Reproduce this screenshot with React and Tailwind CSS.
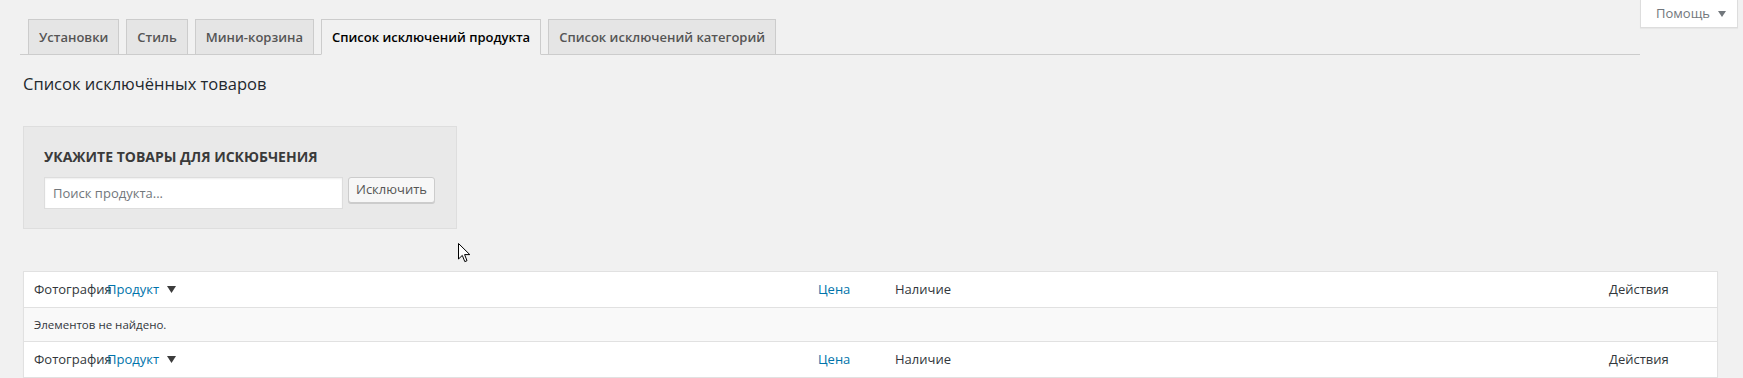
import React from 'react';

const tabs = [
    { label: 'Установки' },
    { label: 'Стиль' },
    { label: 'Мини-корзина' },
    { label: 'Список исключений продукта', active: true },
    { label: 'Список исключений категорий' },
];

const SortArrow = () => (
    <svg width="9" height="7" viewBox="0 0 9 7" className="ml-[8px] inline-block">
        <path d="M0 0 L9 0 L4.5 7 Z" fill="#3c3c3c" />
    </svg>
);

const HeaderRow = ({ border }) => (
    <div className={`grid grid-cols-[73px_711px_77px_714px_1fr] h-[36px] items-center text-[13px] ${border}`}>
        <div className="pl-[10px] whitespace-nowrap text-[#32373c]">Фотография</div>
        <div className="pl-[10px] whitespace-nowrap flex items-center">
            <span className="text-[#0073aa]">Продукт</span>
            <SortArrow />
        </div>
        <div className="pl-[10px] text-[#0073aa]">Цена</div>
        <div className="pl-[10px] text-[#32373c]">Наличие</div>
        <div className="pl-[10px] text-[#32373c]">Действия</div>
    </div>
);

const Cursor = () => (
    <svg width="13" height="20" viewBox="0 0 13 20" className="absolute left-[458px] top-[243px]">
        <path d="M0.5 0.5 L0.5 16 L4.3 12.4 L6.8 18.6 L9 17.7 L6.6 11.6 L11.8 11.6 Z" fill="#fff" stroke="#000" strokeWidth="1" strokeLinejoin="round" />
    </svg>
);

const App = () => {
    return (
        <div className="relative w-full h-[378px] overflow-hidden bg-[#f1f1f1] font-['Open_Sans',sans-serif] text-[#23282d]">
            <div className="pl-[20px] pr-[5px]">
                {/* вкладка помощи справа сверху */}
                <div className="float-right w-[98px] h-[28px] bg-white border border-t-0 border-[#ddd] shadow-[0_1px_1px_rgba(0,0,0,0.04)] flex items-center pl-[15px] text-[13px] text-[#72777c]">
                    Помощь
                    <svg width="8" height="6" viewBox="0 0 8 6" className="ml-[8px]">
                        <path d="M0 0 L8 0 L4 6 Z" fill="#72777c" />
                    </svg>
                </div>

                <div className="pt-[19px] border-b border-[#ccc] flex gap-[7px] pl-[8px]">
                    {tabs.map((t) => (
                        <div
                            key={t.label}
                            className={
                                t.active
                                    ? 'px-[10px] py-[5px] text-[13px] leading-[24px] font-semibold border border-[#ccc] border-b-[#f1f1f1] -mb-px bg-[#f1f1f1] text-black whitespace-nowrap'
                                    : 'px-[10px] py-[5px] text-[13px] leading-[24px] font-semibold border border-b-0 border-[#ccc] bg-[#e5e5e5] text-[#555] whitespace-nowrap'
                            }
                        >
                            {t.label}
                        </div>
                    ))}
                </div>
            </div>

            <div className="pl-[23px] pr-[25px]">
                <h2 className="mt-[17px] text-[16.5px] leading-[24px] font-normal text-[#23282d]">Список исключённых товаров</h2>

                <div className="mt-[30px] w-[434px] h-[103px] bg-[#e9e9e9] border border-[#dedede] pl-[20px] pt-[20px]">
                    <h3 className="text-[14px] leading-[20px] font-bold uppercase text-[#3a3a3a]">Укажите товары для искюбчения</h3>
                    <div className="mt-[10px] flex items-start">
                        <input
                            className="w-[299px] h-[32px] bg-white border border-[#ddd] shadow-[inset_0_1px_2px_rgba(0,0,0,0.07)] px-[8px] text-[13px] text-[#32373c] placeholder:text-[#72777c] outline-none"
                            placeholder="Поиск продукта..."
                        />
                        <button className="ml-[5px] w-[87px] h-[26px] bg-[#f7f7f7] border border-[#ccc] rounded-[3px] shadow-[0_1px_0_#ccc] text-[13px] text-[#555]">
                            Исключить
                        </button>
                    </div>
                </div>

                <div className="mt-[42px] w-[1695px] bg-white border border-[#e1e1e1] shadow-[0_1px_1px_rgba(0,0,0,0.04)]">
                    <HeaderRow border="border-b border-[#e1e1e1]" />
                    <div className="h-[33px] bg-[#f9f9f9] flex items-center pl-[10px] text-[11.5px] text-[#32373c]">
                        Элементов не найдено.
                    </div>
                    <HeaderRow border="border-t border-[#e1e1e1]" />
                </div>
            </div>

            <Cursor />
        </div>
    );
};

export default App;
